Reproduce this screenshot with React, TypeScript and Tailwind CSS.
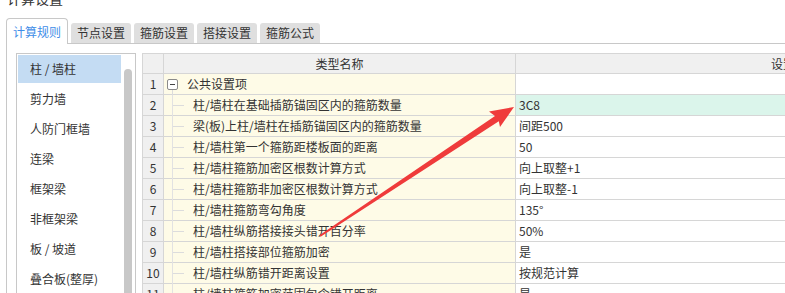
const tabs = ['节点设置', '箍筋设置', '搭接设置', '箍筋公式']

const components = [
  '柱 / 墙柱',
  '剪力墙',
  '人防门框墙',
  '连梁',
  '框架梁',
  '非框架梁',
  '板 / 坡道',
  '叠合板(整厚)',
  '基础',
]

const rules = [
  { name: '柱/墙柱在基础插筋锚固区内的箍筋数量', value: '3C8' },
  { name: '梁(板)上柱/墙柱在插筋锚固区内的箍筋数量', value: '间距500' },
  { name: '柱/墙柱第一个箍筋距楼板面的距离', value: '50' },
  { name: '柱/墙柱箍筋加密区根数计算方式', value: '向上取整+1' },
  { name: '柱/墙柱箍筋非加密区根数计算方式', value: '向上取整-1' },
  { name: '柱/墙柱箍筋弯勾角度', value: '135°' },
  { name: '柱/墙柱纵筋搭接接头错开百分率', value: '50%' },
  { name: '柱/墙柱搭接部位箍筋加密', value: '是' },
  { name: '柱/墙柱纵筋错开距离设置', value: '按规范计算' },
  { name: '柱/墙柱箍筋加密范围包含错开距离', value: '是' },
]

function GridRow({
  num,
  value,
  highlight,
  children,
}: {
  num: number
  value: string
  highlight?: boolean
  children: React.ReactNode
}) {
  return (
    <div className="flex h-[21px] border-b border-[#d6d6d6]">
      <div className="flex w-[21px] shrink-0 items-center justify-center border-r border-[#d6d6d6] bg-[#f0f0f0] text-[12px]">
        {num}
      </div>
      <div className="relative flex w-[352px] shrink-0 items-center border-r border-[#d6d6d6] bg-[#fefbe7]">
        {children}
      </div>
      <div
        className={`flex w-[546px] shrink-0 items-center pl-[3px] ${highlight ? 'bg-[#dbf5eb]' : 'bg-white'}`}
      >
        {value}
      </div>
    </div>
  )
}

export default function App() {
  return (
    <div
      className="relative h-[293px] w-[785px] overflow-hidden bg-white text-[12px] text-[#333]"
      style={{ fontFamily: '"Noto Sans CJK SC", "Liberation Sans", sans-serif' }}
    >
      <div className="h-[18px] overflow-hidden">
        <div className="-mt-[10px] ml-[7px] text-[14px] leading-[16px]">计算设置</div>
      </div>

      {/* tabs */}
      <div className="ml-[6px] flex h-[26px] items-end gap-[3px] border-b border-[#c8c8c8]">
        <div className="-mb-px flex h-[26px] w-[62px] items-center justify-center rounded-t-[4px] border border-b-0 border-[#c8c8c8] bg-white text-[12px] text-[#3f8ee8]">
          计算规则
        </div>
        {tabs.map((t) => (
          <div
            key={t}
            className="flex h-[20px] w-[60px] items-center justify-center rounded-t-[3px] bg-[#dfdfdf] text-[12px] text-[#333]"
          >
            {t}
          </div>
        ))}
      </div>

      {/* panel */}
      <div className="ml-[6px] flex h-[260px] gap-[6px] border-l border-[#c8c8c8] pl-[9px] pt-[9px]">
        {/* component list */}
        <div className="flex h-[300px] w-[120px] shrink-0 border border-[#c8c8c8] pt-[1px] pl-[1px]">
          <div className="w-[103px]">
            {components.map((c, i) => (
              <div
                key={c}
                className={`mb-[2px] flex h-[28px] items-center pl-[12px] ${i === 0 ? 'bg-[#c4dcf3]' : ''}`}
              >
                {c}
              </div>
            ))}
          </div>
          <div className="ml-[3px] mt-[14px] w-[8px] rounded-t-[4px] bg-[#c8c8c8]" />
        </div>

        {/* rules grid */}
        <div className="w-[922px] shrink-0 border-l border-t border-[#d6d6d6]">
          <div className="flex h-[20px] border-b border-[#d6d6d6] bg-[#f0f0f0]">
            <div className="w-[21px] shrink-0 border-r border-[#d6d6d6]" />
            <div className="flex w-[352px] shrink-0 items-center justify-center border-r border-[#d6d6d6]">
              类型名称
            </div>
            <div className="flex w-[546px] shrink-0 items-center justify-center">设置值</div>
          </div>

          <GridRow num={1} value="">
            <div className="ml-[3px] flex h-[11px] w-[11px] items-center justify-center rounded-[2px] border border-[#8a8a8a] bg-white">
              <div className="h-px w-[5px] bg-[#444]" />
            </div>
            <span className="ml-[9px]">公共设置项</span>
            <div className="absolute bottom-[-1px] left-[8px] h-[5px] w-px bg-[#dcdcdc]" />
          </GridRow>

          {rules.map((r, i) => (
            <GridRow key={r.name} num={i + 2} value={r.value} highlight={i === 0}>
              <div className="absolute bottom-[-1px] left-[8px] top-0 w-px bg-[#e2e2e2]" />
              <div className="ml-[9px] h-px w-[11px] bg-[#dcdcdc]" />
              <span className="ml-[9px]">{r.name}</span>
            </GridRow>
          ))}
        </div>
      </div>

      {/* annotation arrow */}
      <svg className="pointer-events-none absolute left-0 top-0" width="785" height="293">
        <polygon
          fill="#ef3b3b"
          points="514,107 489,111.5 495,116 319.4,235.2 320.6,236.8 498.8,121.2 500,127"
        />
      </svg>
    </div>
  )
}
